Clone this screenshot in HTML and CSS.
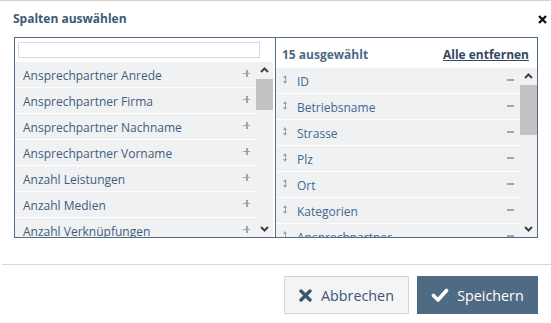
FILE: index.html
```html
<!DOCTYPE html>
<html lang="de">
  <head>
    <meta charset="UTF-8" />
    <meta name="viewport" content="width=device-width, initial-scale=1.0" />
    <title>Spalten auswählen</title>
    <link rel="stylesheet" href="styles.css">
  </head>
  <body>
    <div class="dialog">
      <div class="dialog-head">
        <h1 class="title">Spalten auswählen</h1>
        <button class="close" type="button">
          <svg width="9" height="9" viewBox="0 0 9 9"><path d="M1 1 L8 8 M8 1 L1 8" stroke="#111" stroke-width="2.4" /></svg>
        </button>
      </div>

      <div class="picker">
        <div class="panel panel-available">
          <div class="search">
            <input type="text" class="search-input" />
          </div>
          <div class="list">
            <ul class="rows">
              <li class="row"><span class="row-label">Ansprechpartner Anrede</span><span class="plus"></span></li>
              <li class="row"><span class="row-label">Ansprechpartner Firma</span><span class="plus"></span></li>
              <li class="row"><span class="row-label">Ansprechpartner Nachname</span><span class="plus"></span></li>
              <li class="row"><span class="row-label">Ansprechpartner Vorname</span><span class="plus"></span></li>
              <li class="row"><span class="row-label">Anzahl Leistungen</span><span class="plus"></span></li>
              <li class="row"><span class="row-label">Anzahl Medien</span><span class="plus"></span></li>
              <li class="row"><span class="row-label">Anzahl Verknüpfungen</span><span class="plus"></span></li>
            </ul>
            <div class="scrollbar">
              <svg class="arrow" width="17" height="17" viewBox="0 0 17 17"><path d="M5 10 L8.5 6.5 L12 10" fill="none" stroke="#404040" stroke-width="2" /></svg>
              <span class="thumb" style="height: 31px"></span>
              <span class="track"></span>
              <svg class="arrow" width="17" height="17" viewBox="0 0 17 17"><path d="M5 7 L8.5 10.5 L12 7" fill="none" stroke="#404040" stroke-width="2" /></svg>
            </div>
          </div>
        </div>

        <div class="panel panel-selected">
          <div class="selected-head">
            <span class="count">15 ausgewählt</span>
            <a class="remove-all" href="#">Alle entfernen</a>
          </div>
          <div class="list">
            <ul class="rows">
              <li class="row row-selected"><span class="drag"></span><span class="row-label">ID</span><span class="minus"></span></li>
              <li class="row row-selected"><span class="drag"></span><span class="row-label">Betriebsname</span><span class="minus"></span></li>
              <li class="row row-selected"><span class="drag"></span><span class="row-label">Strasse</span><span class="minus"></span></li>
              <li class="row row-selected"><span class="drag"></span><span class="row-label">Plz</span><span class="minus"></span></li>
              <li class="row row-selected"><span class="drag"></span><span class="row-label">Ort</span><span class="minus"></span></li>
              <li class="row row-selected"><span class="drag"></span><span class="row-label">Kategorien</span><span class="minus"></span></li>
              <li class="row row-selected"><span class="drag"></span><span class="row-label">Ansprechpartner</span><span class="minus"></span></li>
            </ul>
            <div class="scrollbar">
              <svg class="arrow" width="17" height="17" viewBox="0 0 17 17"><path d="M5 10 L8.5 6.5 L12 10" fill="none" stroke="#404040" stroke-width="2" /></svg>
              <span class="thumb" style="height: 50px"></span>
              <span class="track"></span>
              <svg class="arrow" width="17" height="17" viewBox="0 0 17 17"><path d="M5 7 L8.5 10.5 L12 7" fill="none" stroke="#404040" stroke-width="2" /></svg>
            </div>
          </div>
        </div>
      </div>

      <div class="dialog-foot">
        <button class="btn btn-cancel" type="button">
          <svg width="13" height="13" viewBox="0 0 13 13"><path d="M2 2 L11 11 M11 2 L2 11" stroke="#3d5670" stroke-width="3.4" stroke-linecap="round" /></svg>
          <span>Abbrechen</span>
        </button>
        <button class="btn btn-save" type="button">
          <svg width="18" height="14" viewBox="0 0 18 14"><path d="M2.5 7.5 L7 12 L15.5 2.5" fill="none" stroke="#fff" stroke-width="3.6" stroke-linecap="round" stroke-linejoin="round" /></svg>
          <span>Speichern</span>
        </button>
      </div>
    </div>
  </body>
</html>
```

FILE: styles.css
```css
body {
  margin: 0;
  background: #fff;
  font-family: "Open Sans", "Liberation Sans", sans-serif;
  color: #3d5670;
}
.dialog {
  border-top: 1px solid #d2d2d2;
  height: 322px;
}
.dialog-head {
  display: flex;
  align-items: center;
  justify-content: space-between;
  height: 36px;
  padding: 0 4px 0 13px;
}
.title {
  margin: 0;
  font-size: 12px;
  font-weight: 700;
  line-height: 18px;
  color: #3d5a76;
}
.close {
  border: 0;
  background: none;
  padding: 0;
  display: flex;
}

.picker {
  display: grid;
  grid-template-columns: 261px 1fr;
  height: 199px;
  margin: 0 13px 0 14px;
  border: 1px solid #4f6b86;
}
.panel {
  display: flex;
  flex-direction: column;
  min-height: 0;
}
.panel-available {
  border-right: 1px solid #4f6b86;
}
.search {
  padding: 4px 3px;
}
.search-input {
  display: block;
  box-sizing: border-box;
  width: 242px;
  height: 16px;
  margin: 0;
  border: 1px solid #dadada;
  outline: none;
}
.selected-head {
  display: flex;
  align-items: center;
  justify-content: space-between;
  height: 30px;
  padding: 2px 8px 0 6px;
  box-sizing: border-box;
  font-size: 12px;
  font-weight: 700;
}
.count {
  color: #4a6a88;
}
.remove-all {
  color: #33495f;
  text-decoration: underline;
}

.list {
  flex: 1;
  display: flex;
  min-height: 0;
  overflow: hidden;
}
.panel-available .list {
  padding-right: 2px;
}
.rows {
  flex: 1;
  margin: 0;
  padding: 0;
  list-style: none;
}
.row {
  display: flex;
  align-items: center;
  height: 25px;
  padding: 1px 6px 0 8px;
  box-sizing: border-box;
  height: 26px;
  border-bottom: 1px solid #fff;
  background: #f0f1f3;
  font-size: 12px;
  color: #3f5d7b;
}
.row-label {
  flex: 1;
  white-space: nowrap;
}
.row-selected {
  padding-left: 7px;
  color: #3f6892;
}
.plus,
.minus {
  position: relative;
  width: 7px;
  height: 7px;
  margin-top: -4px;
}
.plus::before,
.minus::before,
.plus::after {
  content: "";
  position: absolute;
  background: #a3a3a3;
}
.plus::before {
  left: 0;
  top: 3px;
  width: 7px;
  height: 1.5px;
}
.minus::before {
  left: 0;
  top: 3px;
  width: 7px;
  height: 2px;
}
.plus::after {
  left: 3px;
  top: 0;
  width: 1.5px;
  height: 7px;
}
.drag {
  position: relative;
  width: 5px;
  height: 9px;
  margin: -4px 9px 0 0;
}
.drag::before,
.drag::after {
  content: "";
  position: absolute;
  left: 0;
  border-left: 2.5px solid transparent;
  border-right: 2.5px solid transparent;
}
.drag::before {
  top: 0;
  border-bottom: 3px solid #a0a0a0;
}
.drag::after {
  bottom: 0;
  border-top: 3px solid #a0a0a0;
}
.drag {
  background: linear-gradient(#a0a0a0, #a0a0a0) center / 1px 5px no-repeat;
}

.scrollbar {
  display: flex;
  flex-direction: column;
  width: 17px;
  background: #f1f1f1;
}
.arrow {
  display: block;
  flex: none;
}
.thumb {
  display: block;
  flex: none;
  background: #c2c2c2;
}
.track {
  flex: 1;
}

.dialog-foot {
  display: flex;
  justify-content: flex-end;
  gap: 8px;
  margin: 26px 0 0 2px;
  padding: 11px 13px 0 0;
  border-top: 1px solid #d8d8d8;
}
.btn {
  display: flex;
  align-items: center;
  justify-content: center;
  gap: 9px;
  height: 38px;
  margin: 0;
  font-family: inherit;
  font-size: 14.3px;
  border-radius: 0;
}
.btn-cancel {
  width: 125px;
  background: #f3f4f6;
  border: 1px solid #d3d6da;
  color: #3d5670;
}
.btn-save {
  width: 121px;
  gap: 8px;
  background: #4f6a83;
  border: 1px solid #4f6a83;
  color: #fff;
}
```
